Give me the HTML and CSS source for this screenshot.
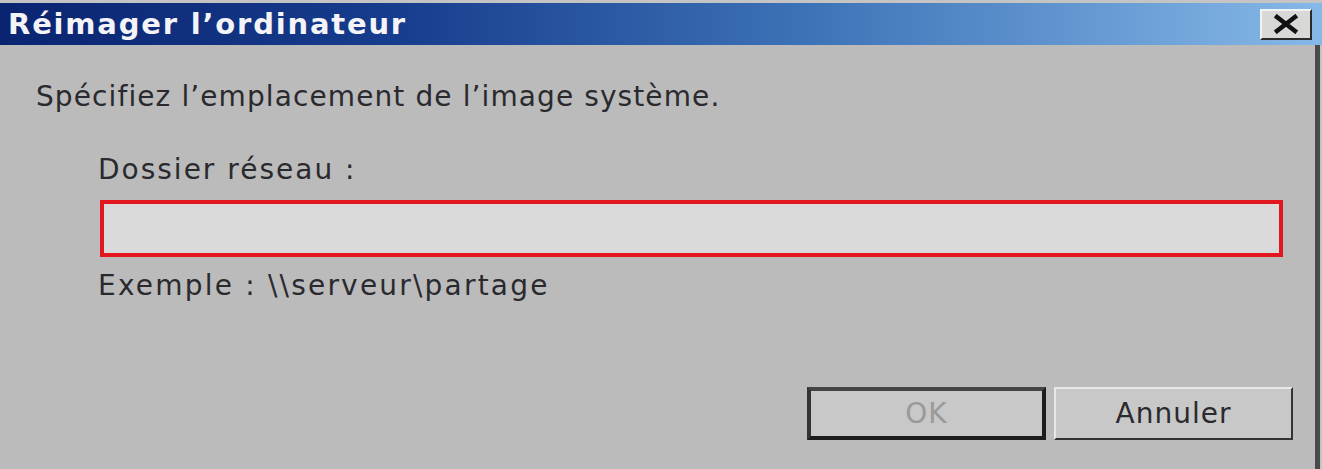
FILE: index.html
```html
<!DOCTYPE html>
<html lang="fr">
<head>
<meta charset="utf-8">
<title>Réimager l'ordinateur</title>
<link rel="stylesheet" href="styles.css">
</head>
<body>
<div class="window">
  <div class="titlebar">
    <span class="title">Réimager l’ordinateur</span>
    <button class="close" aria-label="Fermer">
      <svg width="28" height="20" viewBox="0 0 28 20"><path d="M5 3 L23 17 M23 3 L5 17" stroke="#111" stroke-width="4.5" stroke-linecap="square"/></svg>
    </button>
  </div>
  <div class="content">
    <p class="intro">Spécifiez l’emplacement de l’image système.</p>
    <div class="field">
      <label class="label">Dossier réseau :</label>
      <div class="input"></div>
      <p class="example">Exemple : \\serveur\partage</p>
    </div>
    <div class="buttons">
      <button class="btn btn-default" disabled>OK</button>
      <button class="btn">Annuler</button>
    </div>
  </div>
</div>
</body>
</html>
```
FILE: styles.css
```css
html, body {
  margin: 0;
  padding: 0;
  background: #bdbdbd;
}
body {
  font-family: "DejaVu Sans", Verdana, sans-serif;
  color: #2a2a2e;
}
.window {
  width: 1322px;
  height: 469px;
  display: flex;
  flex-direction: column;
  padding-top: 3px;
  box-sizing: border-box;
  background: #c4c4c4;
}
.titlebar {
  height: 42px;
  display: flex;
  align-items: center;
  justify-content: space-between;
  padding-left: 8px;
  padding-right: 10px;
  background: linear-gradient(to right, #0a2470 0%, #173d8e 30%, #3f74b8 62%, #86b8e8 100%);
}
.title {
  color: #f4f4f8;
  font-weight: bold;
  font-size: 29px;
  letter-spacing: 1.8px;
}
.close {
  width: 52px;
  height: 31px;
  padding: 0;
  margin: 0;
  display: flex;
  align-items: center;
  justify-content: center;
  background: #d8d8d6;
  border: 2px solid;
  border-color: #f2f2f2 #2a2a2a #2a2a2a #f2f2f2;
  box-sizing: border-box;
}
.content {
  flex: 1;
  background: #bbbbbb;
  border-right: 5px solid #4a4a4a;
  margin-right: 2px;
  padding: 35px 0 0 36px;
  display: flex;
  flex-direction: column;
}
.intro {
  margin: 0;
  font-size: 28px;
  line-height: 34px;
  letter-spacing: 1.1px;
}
.field {
  margin-left: 62px;
  margin-top: 39px;
  display: flex;
  flex-direction: column;
}
.label {
  font-size: 28px;
  line-height: 34px;
  letter-spacing: 2px;
}
.input {
  margin-top: 13px;
  width: 1183px;
  height: 57px;
  box-sizing: border-box;
  border: 4px solid #e2161e;
  background: #dadada;
  margin-left: 2px;
}
.example {
  margin: 12px 0 0;
  font-size: 28px;
  line-height: 34px;
  letter-spacing: 2.2px;
}
.buttons {
  display: flex;
  justify-content: flex-end;
  gap: 8px;
  margin-top: 84px;
  margin-right: 22px;
}
.btn {
  width: 239px;
  height: 53px;
  box-sizing: border-box;
  font-family: "DejaVu Sans", Verdana, sans-serif;
  font-size: 28px;
  letter-spacing: 1px;
  color: #2a2a2e;
  background: #c8c8c8;
  border: 2px solid;
  border-color: #e8e8e8 #333 #333 #e8e8e8;
  padding: 0;
}
.btn-default {
  border: 4px solid #1c1c1c;
  border-top-color: #444;
  border-left-color: #333;
  color: #9a9a9a;
}
```
